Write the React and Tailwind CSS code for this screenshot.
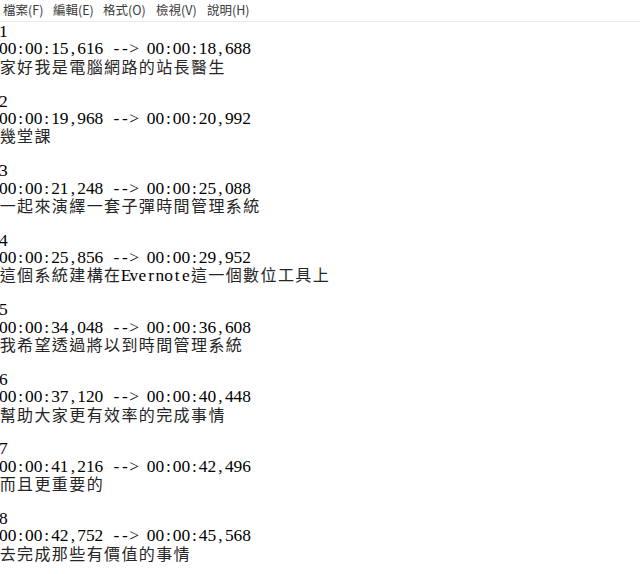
import React from "react";

const entries = [
  ["1", "00:00:15,616 --> 00:00:18,688", "家好我是電腦網路的站長醫生"],
  ["2", "00:00:19,968 --> 00:00:20,992", "幾堂課"],
  ["3", "00:00:21,248 --> 00:00:25,088", "一起來演繹一套子彈時間管理系統"],
  ["4", "00:00:25,856 --> 00:00:29,952", "這個系統建構在Evernote這一個數位工具上"],
  ["5", "00:00:34,048 --> 00:00:36,608", "我希望透過將以到時間管理系統"],
  ["6", "00:00:37,120 --> 00:00:40,448", "幫助大家更有效率的完成事情"],
  ["7", "00:00:41,216 --> 00:00:42,496", "而且更重要的"],
  ["8", "00:00:42,752 --> 00:00:45,568", "去完成那些有價值的事情"],
];

const isWide = (c) => c.charCodeAt(0) > 0x2e80;

function Line({ text, caret }) {
  return (
    <div className="relative h-[17.4px] leading-[17.4px] whitespace-nowrap">
      {caret && <span className="absolute left-0 top-[1px] h-[17px] w-px bg-black" />}
      {[...text].map((c, i) =>
        isWide(c) ? (
          <span
            key={i}
            className="inline-block w-[17.4px] text-center font-['Noto_Sans_CJK_TC',sans-serif] text-[16px] leading-[17.4px] text-[#262626]"
          >
            {c}
          </span>
        ) : (
          <span key={i} className="inline-block w-[8.7px] text-center leading-[17.4px]">
            {c === " " ? "\u00a0" : c}
          </span>
        )
      )}
    </div>
  );
}

export default function App() {
  const menus = [
    ["檔案(F)", "w-[50px]"],
    ["編輯(E)", "w-[50px]"],
    ["格式(O)", "w-[53px]"],
    ["檢視(V)", "w-[51px]"],
    ["說明(H)", ""],
  ];
  return (
    <div className="w-[640px] h-[574px] bg-white overflow-hidden">
      <div className="h-[22px] flex items-center pl-[3px] border-b border-[#ececec] font-['Noto_Sans_CJK_TC',sans-serif] text-[12.5px] text-[#3a3a3a]">
        {menus.map(([t, w]) => (
          <span key={t} className={`${w} shrink-0 whitespace-nowrap`}>
            {t}
          </span>
        ))}
      </div>
      <div className="pt-[1px] -ml-[1px] font-['Liberation_Serif',serif] text-[17.4px] text-black">
        {entries.map(([n, t, s], idx) => (
          <div key={n}>
            <Line text={n} caret={idx === 0} />
            <Line text={t} />
            <Line text={s} />
            <div className="h-[17.4px]" />
          </div>
        ))}
      </div>
    </div>
  );
}
